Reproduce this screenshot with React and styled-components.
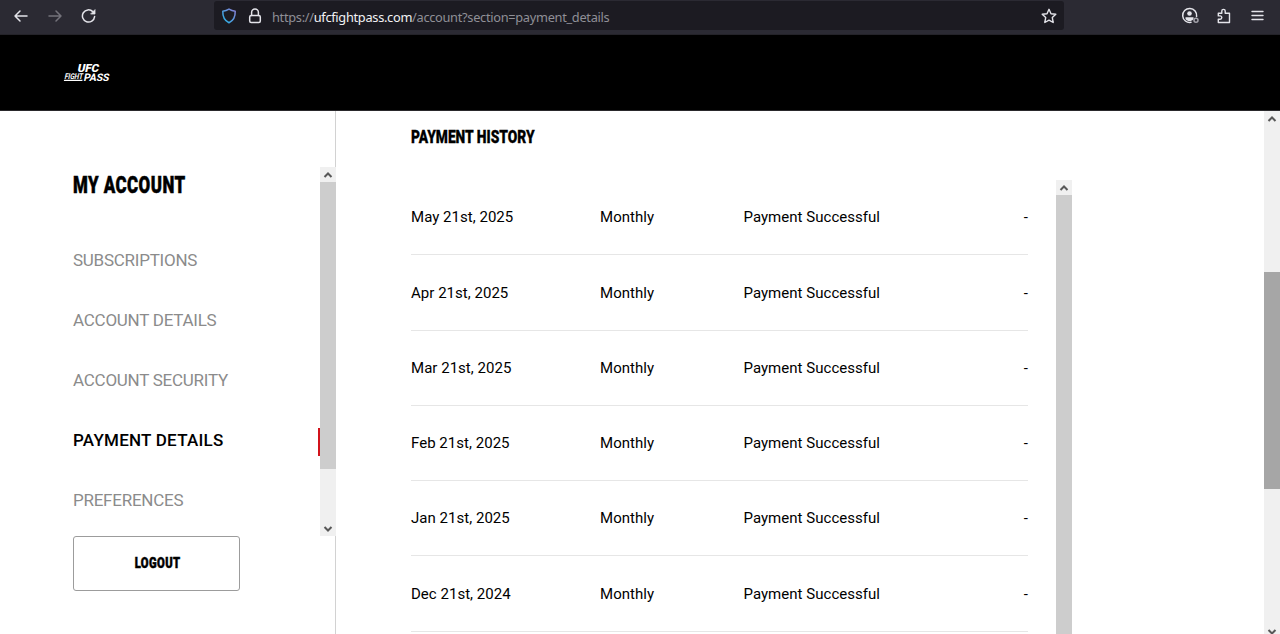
import React from 'react';
import styled, { createGlobalStyle, css } from 'styled-components';

const GlobalStyle = createGlobalStyle`
	* {
		box-sizing: border-box;
	}
	body {
		margin: 0;
		overflow: hidden;
		background: #fff;
		color: #000;
		font-family: Roboto, sans-serif;
	}
`;

const Page = styled.div`
	display: flex;
	flex-direction: column;
	height: 634px;
	overflow: hidden;
`;

const Toolbar = styled.div`
	flex: none;
	display: flex;
	align-items: center;
	height: 35px;
	padding: 0 15px 3px 13px;
	background: #2b2a33;
	border-bottom: 1px solid #242329;
`;

const NavButtons = styled.div`
	display: flex;
	gap: 18px;
	width: 201px;
`;

const AddressBar = styled.div`
	display: flex;
	align-items: center;
	width: 850px;
	height: 29px;
	padding: 0 7px 0 7px;
	border-radius: 3px;
	background: #1c1b22;
`;

const Url = styled.div`
	flex: 1;
	margin-left: 9px;
	padding-top: 2px;
	color: #8f8f96;
	font-family: 'Noto Sans', sans-serif;
	font-size: 12.8px;
	line-height: 20px;
	letter-spacing: -0.3px;
	white-space: nowrap;
`;

const Domain = styled.span`
	color: #f2f2f5;
`;

const Actions = styled.div`
	display: flex;
	align-items: center;
	gap: 17px;
	margin-left: auto;
`;

const Icon = styled.svg`
	display: block;
	flex: none;
	width: ${props => props.$size || 16}px;
	height: ${props => props.$size || 16}px;
	margin-left: ${props => props.$gap || 0}px;
	fill: none;
	stroke: ${props => props.$color || '#e4e4ea'};
	stroke-width: ${props => props.$weight || 1.5};
	stroke-linecap: round;
	stroke-linejoin: round;
`;

const Header = styled.header`
	flex: none;
	height: 76px;
	padding: 24px 0 0 63px;
	background: #000;
	border-bottom: 1px solid #2a292c;
`;

const Logo = styled.svg`
	display: block;
	width: 52px;
	height: 28px;
	overflow: visible;
	fill: #fff;
	font-family: Roboto, sans-serif;
`;

const Content = styled.div`
	flex: 1;
	display: flex;
	min-height: 0;
`;

const Sidebar = styled.aside`
	flex: none;
	display: flex;
	flex-direction: column;
	width: 336px;
	padding-top: 56px;
	border-right: 1px solid #d2d2d2;
`;

const MenuArea = styled.div`
	display: flex;
	width: 336px;
	height: 369px;
`;

const Menu = styled.nav`
	flex: 1;
	padding-left: 73px;
`;

const Condensed = styled.span`
	display: inline-block;
	font-weight: 900;
	letter-spacing: ${props => props.$spacing || 0}px;
	white-space: nowrap;
	transform: scaleX(${props => props.$scale});
	transform-origin: ${props => props.$origin || 'left'} center;
	-webkit-text-stroke: ${props => props.$stroke || 0.3}px #000;
`;

const AccountTitle = styled.h1`
	height: 35px;
	margin: 0 0 46px;
	font-size: 23.5px;
	line-height: 36px;
`;

const MenuItem = styled.div`
	height: 28px;
	margin-bottom: 32px;
	color: #8b8b8b;
	font-size: 17px;
	line-height: 24px;
	letter-spacing: -0.25px;
	${props => props.$active && css`
		color: #000;
		font-weight: 500;
		letter-spacing: 0.25px;
		border-right: 2px solid #d2131b;
	`}
`;

const Logout = styled.button`
	width: 167px;
	height: 55px;
	margin: 0 0 0 73px;
	padding: 0 0 0 2px;
	border: 1px solid #9c9c9c;
	border-radius: 3px;
	background: #fff;
	color: #000;
	font-family: Roboto, sans-serif;
	font-size: 14px;
	line-height: 53px;
`;

const Main = styled.main`
	flex: 1;
	padding: 14px 0 0 75px;
`;

const SectionTitle = styled.h2`
	height: 26px;
	margin: 0 0 29px;
	font-size: 18.5px;
	line-height: 25px;
`;

const History = styled.div`
	display: flex;
	width: 661px;
	height: 460px;
`;

const Table = styled.div`
	flex: none;
	width: 617px;
	margin-right: 28px;
`;

const Row = styled.div`
	display: grid;
	grid-template-columns: 189px 143.5px 1fr auto;
	align-items: center;
	height: 75.25px;
	padding-top: 0.6px;
	border-bottom: 1px solid #e6e6e6;
	font-size: 15px;
	letter-spacing: 0.03px;
	white-space: nowrap;
`;

const Track = styled.div`
	flex: none;
	display: flex;
	flex-direction: column;
	align-items: center;
	width: 16px;
	background: #f0f0f0;
`;

const ArrowBox = styled.div`
	flex: none;
	display: flex;
	align-items: center;
	justify-content: center;
	height: ${props => props.$height || 15}px;
`;

const Thumb = styled.div`
	flex: none;
	width: 16px;
	height: ${props => props.$height}px;
	margin-top: ${props => props.$offset || 0}px;
	margin-bottom: auto;
	background: ${props => props.$color || '#cdcdcd'};
`;

const menuItems = [
	'SUBSCRIPTIONS',
	'ACCOUNT DETAILS',
	'ACCOUNT SECURITY',
	'PAYMENT DETAILS',
	'PREFERENCES'
];

const payments = [
	'May 21st, 2025',
	'Apr 21st, 2025',
	'Mar 21st, 2025',
	'Feb 21st, 2025',
	'Jan 21st, 2025',
	'Dec 21st, 2024'
];

const Arrow = ({ down }) => (
	<Icon $size={10} viewBox="0 0 10 10" $color="#585858" $weight={2}>
		<path strokeLinecap="butt" strokeLinejoin="miter" d={down ? 'M1.5 3 5 6.5 8.5 3' : 'M1.5 7 5 3.5 8.5 7'} />
	</Icon>
);

const Scrollbar = ({ thumb, offset, color, endHeight }) => (
	<Track>
		<ArrowBox><Arrow /></ArrowBox>
		<Thumb $height={thumb} $offset={offset} $color={color} />
		{endHeight && <ArrowBox $height={endHeight}><Arrow down /></ArrowBox>}
	</Track>
);

const BrowserBar = () => (
	<Toolbar>
		<NavButtons>
			<Icon viewBox="0 0 16 16"><path d="M14 8H2M7 3 2 8l5 5" /></Icon>
			<Icon viewBox="0 0 16 16" $color="#74737b"><path d="M2 8h12M9 3l5 5-5 5" /></Icon>
			<Icon viewBox="0 0 16 16">
				<path d="M13.6 8.6A6.1 6.1 0 1 1 11.8 3.6L13 4.8" />
				<path d="M14 2v4h-4z" fill="#e4e4ea" strokeWidth="0.8" />
			</Icon>
		</NavButtons>
		<AddressBar>
			<Icon viewBox="0 0 16 16" $color="url(#shield)">
				<defs>
					<linearGradient id="shield" x1="0" y1="1" x2="1" y2="0">
						<stop offset="0" stopColor="#22b5e6" />
						<stop offset="1" stopColor="#8c7fd6" />
					</linearGradient>
				</defs>
				<path d="M8 1.1c1.9 1.2 3.8 1.9 6.2 2.2.2 5-1.6 9.3-6.2 11.5C3.4 12.6 1.6 8.3 1.8 3.3 4.2 3 6.1 2.3 8 1.1z" />
			</Icon>
			<Icon viewBox="0 0 16 16" $gap={10}>
				<path d="M4.6 7.5V4.500a3.400 3.400 0 0 1 6.800 0v3" />
				<rect x="2.7" y="7.5" width="10.6" height="7" rx="1.5" />
			</Icon>
			<Url>https://<Domain>ufcfightpass.com</Domain>/account?section=payment_details</Url>
			<Icon viewBox="0 0 16 16" $weight={1.4}>
				<path d="m8 1.3 2 4.4 4.8.6-3.5 3.3.9 4.9L8 12.100l-4.200 2.400.9-4.900L1.200 6.300 6 5.700z" />
			</Icon>
		</AddressBar>
		<Actions>
			<Icon viewBox="0 0 18 18" $size={18}>
				<path d="M10 15.3A7 7 0 1 1 15.6 9.5" />
				<circle cx="8.5" cy="6.5" r="2.3" fill="#e4e4ea" stroke="none" />
				<path d="M4.5 10.2h8v1.7c-1 1.4-2.3 2-4 2s-3-.6-4-2z" fill="#e4e4ea" stroke="none" />
				<circle cx="15" cy="13.3" r="2" stroke="#a3a2aa" />
			</Icon>
			<Icon viewBox="0 0 16 16" $weight={1.4}>
				<path d="M2.3 14.5v-3.200h1.800a1.700 1.700 0 0 0 0-3.400H2.300V5.200h3.500V3.100a1.700 1.700 0 0 1 3.400 0v2.100h4.300v9.300z" />
			</Icon>
			<Icon viewBox="0 0 16 16" $weight={1.4}>
				<path d="M3 3.500h11M3 7.500h11M3 11.500h11" />
			</Icon>
		</Actions>
	</Toolbar>
);

const FightPassLogo = () => (
	<Logo viewBox="0 0 52 28">
		<g transform="skewX(-12)">
			<text x="16.7" y="13" fontSize="11.2" fontWeight="900" textLength="21.500" lengthAdjust="spacingAndGlyphs">UFC</text>
			<text x="5.400" y="19.600" fontSize="8" fontWeight="700" textLength="18.300" lengthAdjust="spacingAndGlyphs">FIGHT</text>
			<text x="24.800" y="22" fontSize="10.400" fontWeight="700" textLength="25.500" lengthAdjust="spacingAndGlyphs">PASS</text>
			<rect x="5.500" y="20.700" width="18.500" height="1.300" />
		</g>
	</Logo>
);

const App = () => (
	<>
		<GlobalStyle />
		<Page>
			<BrowserBar />
			<Header>
				<FightPassLogo />
			</Header>
			<Content>
				<Sidebar>
					<MenuArea>
						<Menu>
							<AccountTitle><Condensed $scale={0.72} $spacing={0.6} $stroke={0.5}>MY ACCOUNT</Condensed></AccountTitle>
							{menuItems.map(item => (
								<MenuItem key={item} $active={item === 'PAYMENT DETAILS'}>{item}</MenuItem>
							))}
						</Menu>
						<Scrollbar thumb={287} endHeight={15} />
					</MenuArea>
					<Logout><Condensed $scale={0.8} $spacing={0.5} $origin="center" $stroke={0.5}>LOGOUT</Condensed></Logout>
				</Sidebar>
				<Main>
					<SectionTitle><Condensed $scale={0.745}>PAYMENT HISTORY</Condensed></SectionTitle>
					<History>
						<Table>
							{payments.map(date => (
								<Row key={date}>
									<span>{date}</span>
									<span>Monthly</span>
									<span>Payment Successful</span>
									<span>-</span>
								</Row>
							))}
						</Table>
						<Scrollbar thumb={460} />
					</History>
				</Main>
				<Scrollbar thumb={217} offset={146} color="#a6a6a6" endHeight={5} />
			</Content>
		</Page>
	</>
);

export default App;
